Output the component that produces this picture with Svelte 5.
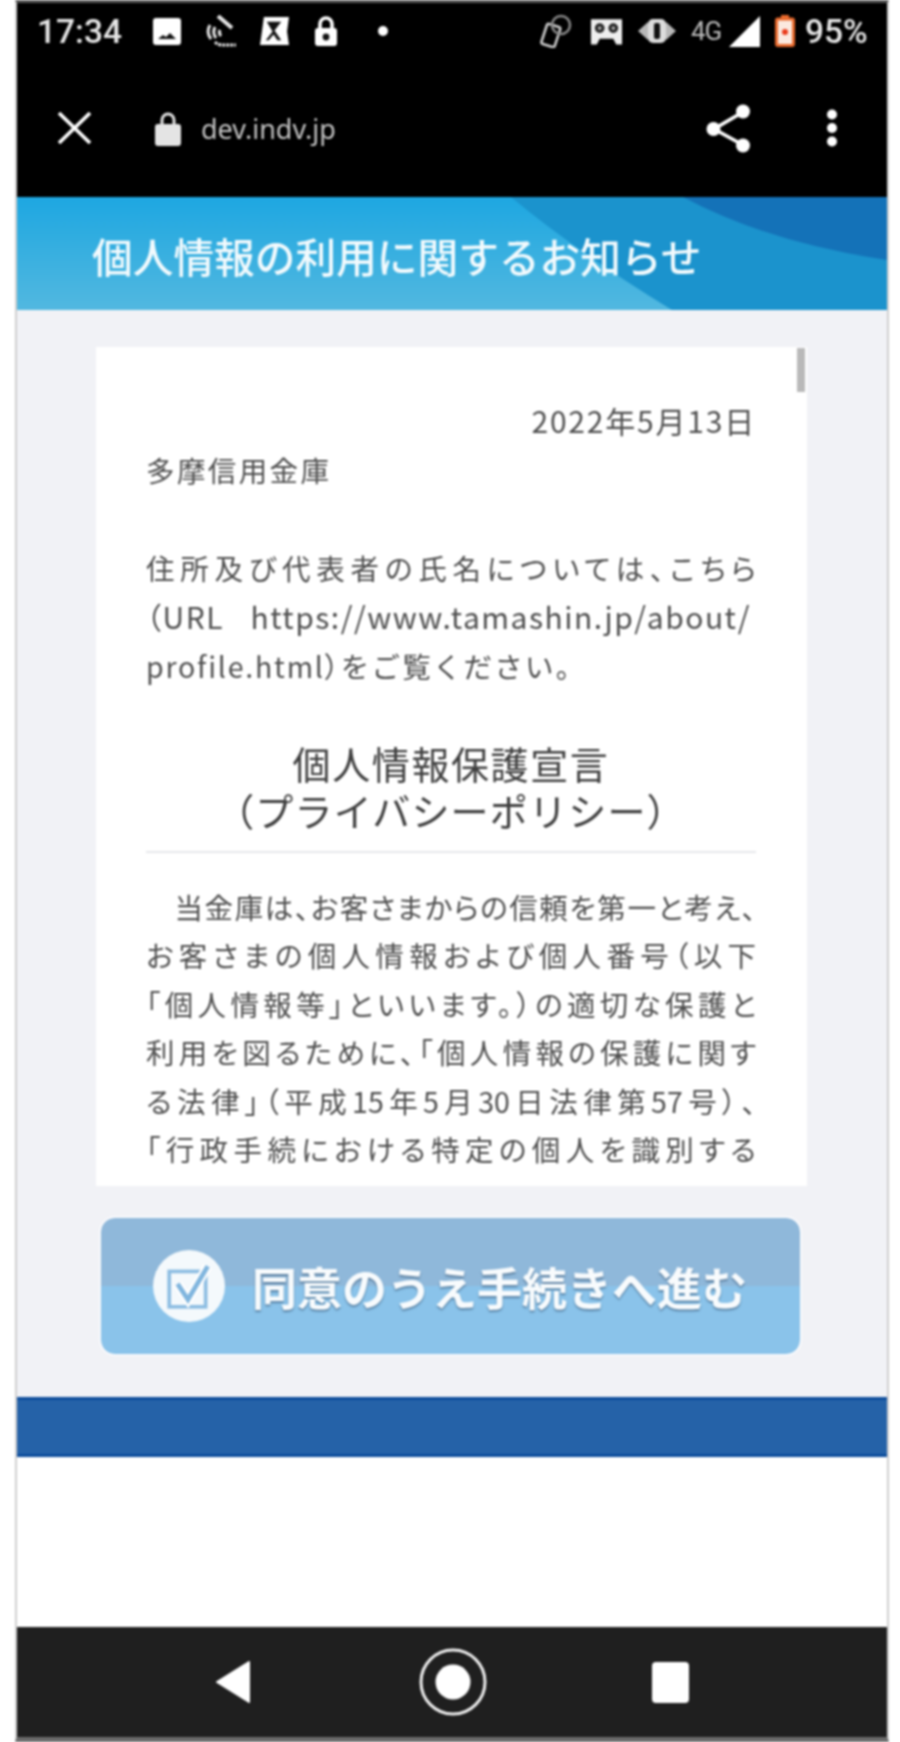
<script lang="ts">
	/** Privacy notice page as seen in an Android custom tab. */
	const bodyLines = [
		'お客さまの個人情報および個人番号（以下',
		'「個人情報等」といいます。）の適切な保護と',
		'利用を図るために、「個人情報の保護に関す',
		'る法律」（平成15年5月30日法律第57号）、',
		'「行政手続における特定の個人を識別する'
	];
</script>

<div class="frame">
	<div class="chrome">
		<div class="status">
			<span class="time">17:34</span>
			<svg class="ic-image" viewBox="0 0 28 27"><rect width="28" height="27" rx="3" fill="#fff" /><path d="M5 21l5-4 3 2 4-4 6 6z" fill="#111" /></svg>
			<svg class="ic-wifi" viewBox="0 0 34 32" fill="none" stroke="#e4e4e4" stroke-width="3"><path d="M15 1l14 12" stroke-width="4" /><path d="M7 10c-3 5-3 9 1 14" /><path d="M12 12c-2 4-2 7 1 11" /><path d="M17 15c-1 2-1 4 1 6" /><path d="M12 27c3 3 6 3 9 3h12" stroke-dasharray="3 1" /></svg>
			<svg class="ic-sim" viewBox="0 0 30 29"><path d="M4 0h26l-2 15 2 14H0l2-14z" fill="#fff" /><path d="M7 5h15l-7 9 7 10h-4l-4-6-5 6H6l7-9z" fill="#111" /></svg>
			<svg class="ic-lock" viewBox="0 0 22 30"><path d="M5 13V8a6 6 0 0 1 12 0v5" fill="none" stroke="#fff" stroke-width="3.6" /><rect y="12" width="22" height="18" rx="3" fill="#fff" /><circle cx="11" cy="21" r="3.4" fill="#111" /></svg>
			<span class="dot"></span>
			<svg class="ic-link" viewBox="0 0 32 34" fill="none" stroke="#ccc" stroke-width="2.6"><rect x="4" y="11" width="14" height="21" rx="2" transform="rotate(18 11 21)" /><circle cx="21" cy="11" r="9" stroke="#888" /></svg>
			<svg class="ic-tape" viewBox="0 0 34 28"><path d="M1 2h32v26h-6l-3-6H10l-3 6H1z" fill="#eee" /><circle cx="10" cy="11" r="5" fill="#222" /><circle cx="24" cy="11" r="5" fill="#222" /><circle cx="10" cy="11" r="2" fill="#aaa" /><circle cx="24" cy="11" r="2" fill="#aaa" /></svg>
			<svg class="ic-vibrate" viewBox="0 0 38 24"><path d="M10 3L0 12l10 9z" fill="#b8b8b8" /><path d="M28 3l10 9-10 9z" fill="#b8b8b8" /><rect x="10" y="0" width="18" height="24" rx="5" fill="#dcdcdc" /><rect x="16" y="4" width="6" height="16" rx="2" fill="#111" /></svg>
			<span class="net">4G</span>
			<svg class="ic-signal" viewBox="0 0 30 30"><path d="M30 0v30H0z" fill="#fff" /></svg>
			<svg class="ic-battery" viewBox="0 0 20 32"><rect x="6" y="0" width="8" height="4" fill="#e8692c" /><rect x="1.5" y="4" width="17" height="26.5" rx="1.5" fill="#fbe9df" stroke="#e8692c" stroke-width="3" /><circle cx="10" cy="17" r="3" fill="#ea3a1a" /></svg>
			<span class="pct">95%</span>
		</div>
		<div class="toolbar">
			<svg class="ic-close" viewBox="0 0 35 32" fill="none" stroke="#fff" stroke-width="3.6"><path d="M2 1l31 30M33 1L2 31" /></svg>
			<svg class="ic-secure" viewBox="0 0 26 35"><path d="M7 15V9a6 6 0 0 1 12 0v6" fill="none" stroke="#e4e4e4" stroke-width="3" /><rect y="13" width="26" height="22" rx="3" fill="#e4e4e4" /></svg>
			<span class="url">dev.indv.jp</span>
			<svg class="ic-share" viewBox="0 0 45 49" fill="#fff"><path d="M37 8L8 25l29 16" fill="none" stroke="#fff" stroke-width="3.6" /><circle cx="37" cy="7.5" r="7" /><circle cx="7.5" cy="25" r="7" /><circle cx="37" cy="41.5" r="7" /></svg>
			<svg class="ic-more" viewBox="0 0 12 38" fill="#fff"><circle cx="6" cy="5.5" r="5" /><circle cx="6" cy="19" r="5" /><circle cx="6" cy="32.5" r="5" /></svg>
		</div>
	</div>

	<header class="hero">
		<svg class="hero__bg" viewBox="0 0 870 113" preserveAspectRatio="none">
			<path d="M494 0Q560 55 655 113H870V0z" fill="#1b93cd" />
			<path d="M666 0Q750 45 870 63V0z" fill="#1472b8" />
		</svg>
		<h1>個人情報の利用に関するお知らせ</h1>
	</header>

	<main class="content">
		<section class="card">
			<div class="scrollbar"></div>
			<p class="date">2022年5月13日</p>
			<p class="plain">多摩信用金庫</p>
			<div class="address">
				<p class="just">住所及び代表者の氏名については、こちら</p>
				<p class="link-line"><span>（URL</span><span>https://www.tamashin.jp/about/</span></p>
				<p class="plain plain--link">profile.html）<span class="full">をご覧ください。</span></p>
			</div>
			<h2><span class="h2-main">個人情報保護宣言</span><span class="h2-sub">（プライバシーポリシー）</span></h2>
			<hr />
			<div class="body">
				<p class="just first">当金庫は、お客さまからの信頼を第一と考え、</p>
				{#each bodyLines as line}
					<p class="just">{line}</p>
				{/each}
			</div>
		</section>
		<button class="agree">
			<span class="agree__icon">
				<svg viewBox="0 0 48 48" fill="none">
					<rect x="5" y="10" width="35" height="34" stroke="#8dbde2" stroke-width="3.5" />
					<path d="M13 22l10 15L42 5" stroke="#fff" stroke-width="9" />
					<path d="M13 22l10 15L42 5" stroke="#7fb5de" stroke-width="4.5" />
				</svg>
			</span>
			<span class="agree__label">同意のうえ手続きへ進む</span>
		</button>
	</main>

	<div class="band"></div>
	<div class="blank"></div>

	<nav class="nav">
		<svg class="nav__back" viewBox="0 0 36 44"><path d="M34 2v40L2 22z" fill="#fff" stroke="#fff" stroke-width="2" stroke-linejoin="round" /></svg>
		<svg class="nav__home" viewBox="0 0 70 70"><circle cx="35" cy="35" r="32" fill="none" stroke="#eee" stroke-width="3" /><circle cx="35" cy="35" r="17.5" fill="#fff" /></svg>
		<span class="nav__recent"></span>
	</nav>
</div>

<style>
	:global(body) {
		background: #fff;
	}

	.frame {
		box-sizing: border-box;
		width: 874px;
		height: 1742px;
		margin-left: 15px;
		display: flex;
		flex-direction: column;
		border: solid #cfcfcf;
		border-width: 3px 2px 5px;
		border-top-color: #555;
		border-bottom-color: #6b6b6b;
		background: #fff;
		font-family: 'Noto Sans CJK JP', 'Noto Sans', sans-serif;
		filter: blur(1px);
	}

	.chrome {
		background: #000;
		flex: none;
	}

	.status {
		height: 56px;
		display: flex;
		align-items: center;
		color: #e6e6e6;
		font-family: Roboto, sans-serif;
		font-size: 33.5px;
		font-weight: 500;
		padding-left: 20px;
	}

	.time {
		width: 116px;
		flex: none;
	}

	.status svg {
		flex: none;
	}

	.ic-image {
		width: 28px;
		height: 27px;
		margin-right: 22px;
	}

	.ic-wifi {
		width: 34px;
		height: 32px;
		margin-right: 23px;
	}

	.ic-sim {
		width: 29px;
		height: 28px;
		margin-right: 26px;
	}

	.ic-lock {
		width: 22px;
		height: 30px;
		margin-right: 41px;
	}

	.dot {
		width: 10px;
		height: 10px;
		border-radius: 50%;
		background: #fff;
		margin-right: 152px;
	}

	.ic-link {
		width: 32px;
		height: 34px;
		margin-right: 18px;
	}

	.ic-tape {
		width: 33px;
		height: 28px;
		margin-right: 15px;
	}

	.ic-vibrate {
		width: 38px;
		height: 24px;
		margin-right: 15px;
	}

	.net {
		width: 38px;
		flex: none;
		font-size: 26px;
		font-weight: 400;
		color: #bbb;
		letter-spacing: -1px;
	}

	.ic-signal {
		width: 31px;
		height: 31px;
		margin-right: 15px;
	}

	.ic-battery {
		width: 20px;
		height: 32px;
		margin-right: 10px;
	}

	.pct {
		flex: none;
	}

	.toolbar {
		height: 138px;
		display: flex;
		align-items: center;
		padding: 0 49px 0 40px;
	}

	.ic-close {
		width: 35px;
		height: 32px;
		margin-right: 63px;
	}

	.ic-secure {
		width: 26px;
		height: 35px;
		margin-right: 20px;
	}

	.url {
		font-family: 'Noto Sans', sans-serif;
		font-size: 27px;
		color: #c4c4c4;
	}

	.ic-share {
		width: 45px;
		height: 49px;
		margin-left: auto;
		margin-right: 75px;
	}

	.ic-more {
		width: 12px;
		height: 38px;
	}

	.hero {
		position: relative;
		flex: none;
		box-sizing: border-box;
		height: 113px;
		display: flex;
		align-items: center;
		padding: 6px 0 0 75px;
		background: linear-gradient(#1ea7e1, #52b8e0);
	}

	.hero__bg {
		position: absolute;
		inset: 0;
		width: 100%;
		height: 100%;
	}

	.hero h1 {
		position: relative;
		margin: 0;
		color: #f2fafd;
		font-size: 40.7px;
		font-weight: 500;
		line-height: 1;
	}

	.content {
		flex: none;
		box-sizing: border-box;
		height: 1087px;
		padding: 37px 80px 0 79px;
		background: #f1f2f6;
	}

	.card {
		position: relative;
		box-sizing: border-box;
		height: 839px;
		padding: 49px 51px 0 50px;
		background: #fff;
		overflow: hidden;
		color: #4f4f4f;
		font-size: 28.5px;
		line-height: 49px;
		font-feature-settings: 'palt';
	}

	.scrollbar {
		position: absolute;
		top: 1px;
		right: 2px;
		width: 8px;
		height: 44px;
		background: #b9b9b9;
	}

	p {
		margin: 0;
	}

	.date {
		text-align: right;
		font-size: 30px;
		letter-spacing: 1.8px;
	}

	.plain {
		letter-spacing: 2.4px;
	}

	.plain--link {
		letter-spacing: 1.8px;
	}

	.full {
		font-feature-settings: normal;
		letter-spacing: 2.2px;
	}

	.just {
		text-align: justify;
		text-align-last: justify;
	}

	.first {
		text-indent: 1em;
	}

	.address {
		margin-top: 49px;
	}

	.link-line {
		display: flex;
		justify-content: space-between;
		padding-right: 5px;
		font-size: 30px;
		letter-spacing: 1.5px;
	}

	.card h2 {
		margin: 49px 0 0;
		font-size: 38px;
		font-weight: 400;
		line-height: 47px;
		text-align: center;
		color: #3f3f3f;
		font-feature-settings: normal;
	}

	.card h2 span {
		display: block;
	}

	.card h2 .h2-main {
		letter-spacing: 1.6px;
	}

	.card h2 .h2-sub {
		letter-spacing: 1.2px;
	}

	.card hr {
		margin: 18px 0 0;
		height: 2px;
		border: 0;
		background: #e6e7ea;
	}

	.body {
		margin-top: 30px;
		line-height: 48.4px;
	}

	.agree {
		box-sizing: border-box;
		width: 699px;
		height: 136px;
		margin: 32px 0 0 5px;
		padding: 0 0 0 52px;
		display: flex;
		align-items: center;
		gap: 27px;
		border: 0;
		border-radius: 14px;
		outline: 2px solid #f8f9fc;
		background: linear-gradient(#8fb8da 50%, #8ac3ea 50%);
		font-family: inherit;
	}

	.agree__icon {
		flex: none;
		width: 72px;
		height: 72px;
		border-radius: 50%;
		background: #f4f9fc;
		display: flex;
		align-items: center;
		justify-content: center;
	}

	.agree__icon svg {
		width: 50px;
		height: 50px;
	}

	.agree__label {
		color: #f8fbfd;
		font-size: 45px;
		font-weight: 700;
		line-height: 1;
		text-shadow: 0 2px 2px rgba(60, 90, 120, 0.6);
	}

	.band {
		flex: none;
		box-sizing: border-box;
		height: 60px;
		background: #2562a8;
		border: solid #0d4d9c;
		border-width: 3px 0;
	}

	.blank {
		flex: 1;
	}

	.nav {
		flex: none;
		height: 110px;
		background: #1f1f1f;
		display: flex;
		align-items: center;
		padding-left: 198px;
	}

	.nav__back {
		width: 36px;
		height: 44px;
		margin-right: 167px;
	}

	.nav__home {
		width: 70px;
		height: 70px;
		margin-right: 164px;
	}

	.nav__recent {
		width: 37px;
		height: 41px;
		border-radius: 4px;
		background: #fff;
	}
</style>
